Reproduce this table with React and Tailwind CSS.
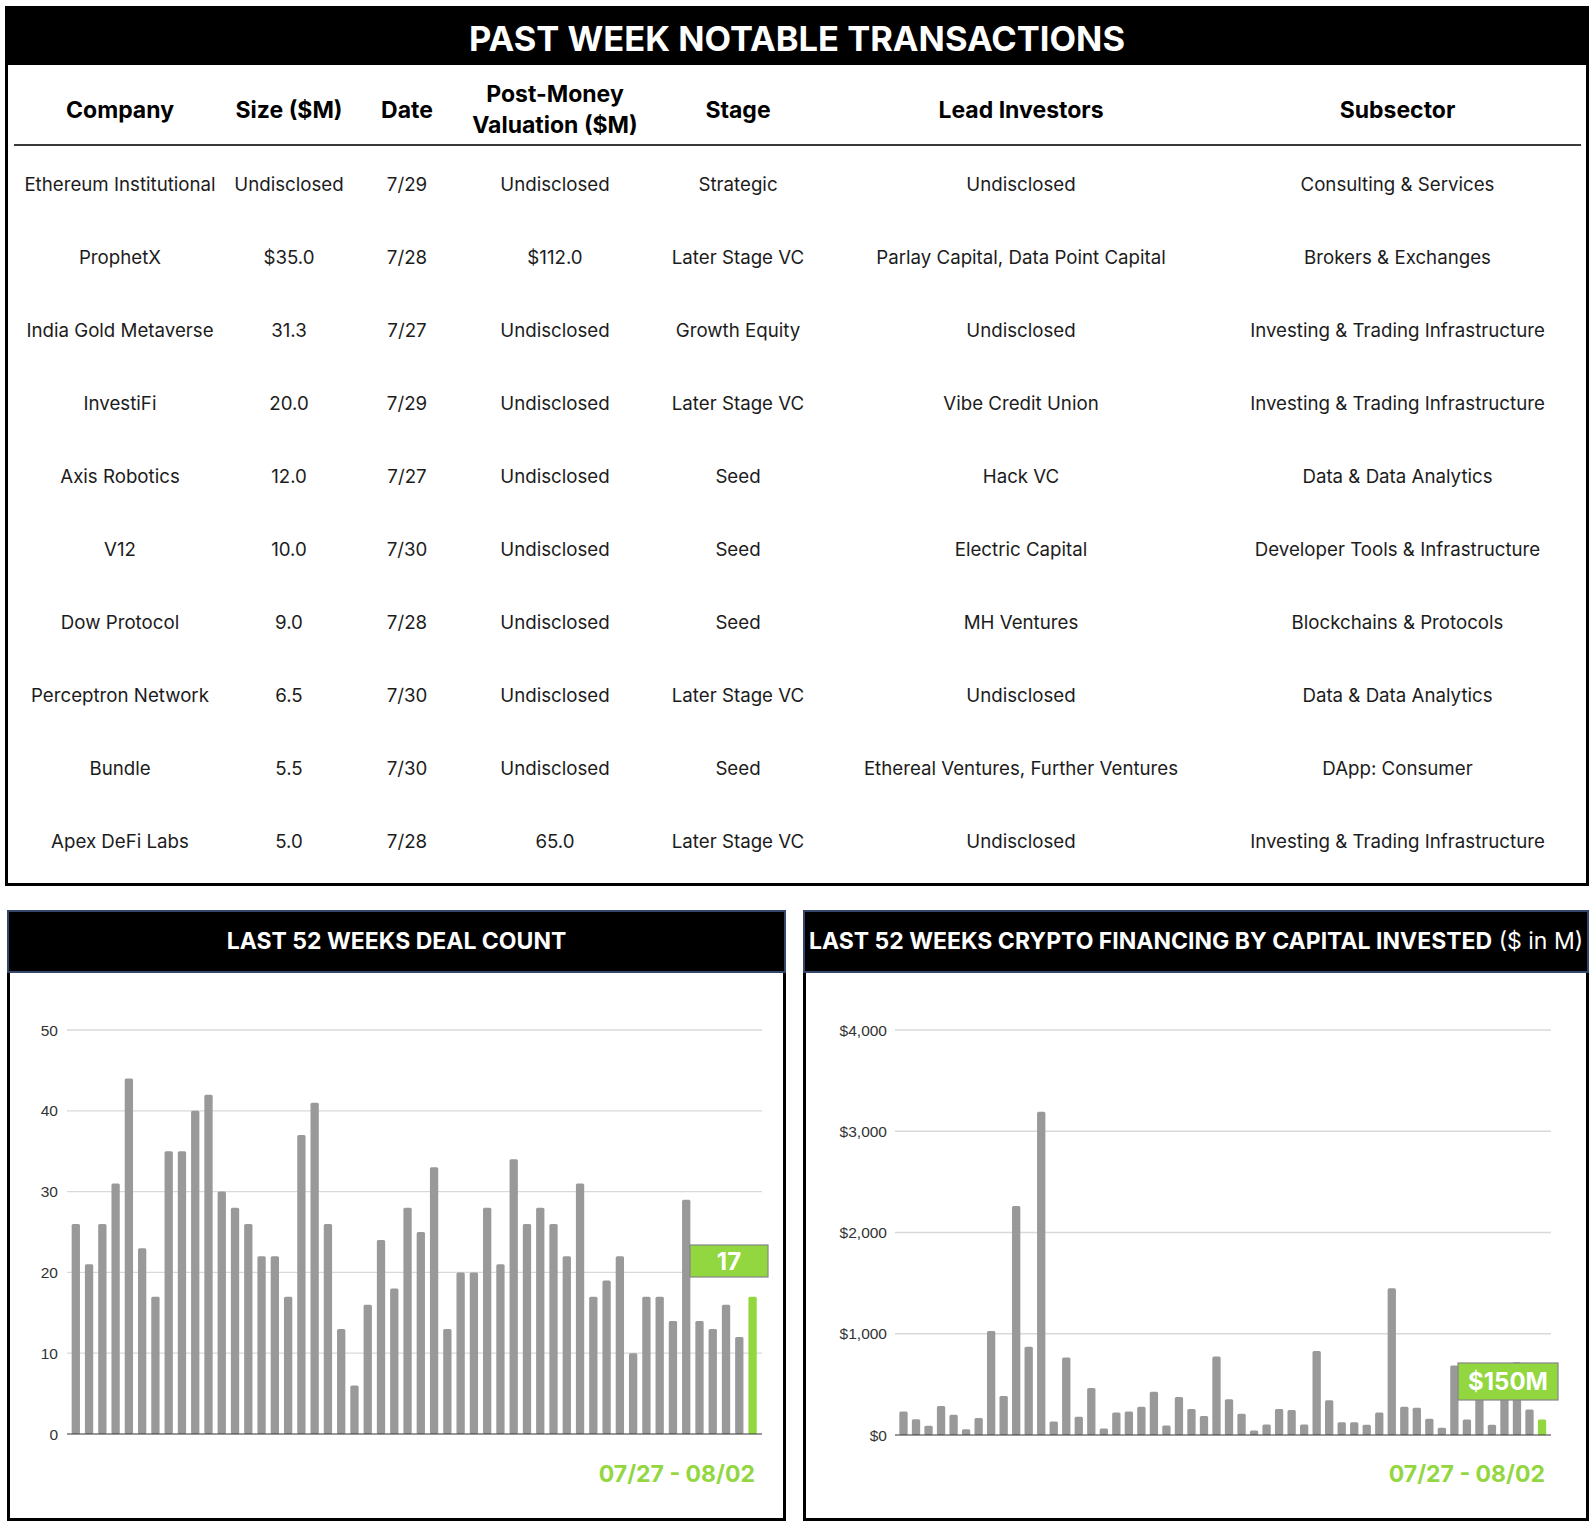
import React from 'react';

const columns = ['Company', 'Size ($M)', 'Date', 'Post-Money\nValuation ($M)', 'Stage', 'Lead Investors', 'Subsector'];

const deals = [
    ['Ethereum Institutional', 'Undisclosed', '7/29', 'Undisclosed', 'Strategic', 'Undisclosed', 'Consulting & Services'],
    ['ProphetX', '$35.0', '7/28', '$112.0', 'Later Stage VC', 'Parlay Capital, Data Point Capital', 'Brokers & Exchanges'],
    ['India Gold Metaverse', '31.3', '7/27', 'Undisclosed', 'Growth Equity', 'Undisclosed', 'Investing & Trading Infrastructure'],
    ['InvestiFi', '20.0', '7/29', 'Undisclosed', 'Later Stage VC', 'Vibe Credit Union', 'Investing & Trading Infrastructure'],
    ['Axis Robotics', '12.0', '7/27', 'Undisclosed', 'Seed', 'Hack VC', 'Data & Data Analytics'],
    ['V12', '10.0', '7/30', 'Undisclosed', 'Seed', 'Electric Capital', 'Developer Tools & Infrastructure'],
    ['Dow Protocol', '9.0', '7/28', 'Undisclosed', 'Seed', 'MH Ventures', 'Blockchains & Protocols'],
    ['Perceptron Network', '6.5', '7/30', 'Undisclosed', 'Later Stage VC', 'Undisclosed', 'Data & Data Analytics'],
    ['Bundle', '5.5', '7/30', 'Undisclosed', 'Seed', 'Ethereal Ventures, Further Ventures', 'DApp: Consumer'],
    ['Apex DeFi Labs', '5.0', '7/28', '65.0', 'Later Stage VC', 'Undisclosed', 'Investing & Trading Infrastructure'],
];

const dealCounts = [
    26, 21, 26, 31, 44, 23, 17, 35, 35, 40, 42, 30, 28, 26, 22, 22, 17, 37, 41, 26, 13, 6, 16, 24, 18, 28,
    25, 33, 13, 20, 20, 28, 21, 34, 26, 28, 26, 22, 31, 17, 19, 22, 10, 17, 17, 14, 29, 14, 13, 16, 12, 17,
];

const capital = [
    233, 155, 92, 286, 201, 56, 169, 1027, 385, 2262, 871, 3192, 134, 765, 180, 465, 63, 222, 233, 279, 427, 95, 375, 256, 188, 775,
    352, 211, 45, 104, 256, 248, 104, 830, 342, 125, 125, 102, 223, 1449, 278, 270, 161, 71, 687, 153, 420, 102, 480, 719, 251, 153,
];

const GREEN = '#92d640';

// one bar chart, drawn in the panel body's own coordinates
const BarChart = ({ width, values, ticks, gridX1, gridX2, baseY, perUnit, firstX, pitch, labelX, badge, dateX }) => (
    <svg width={width} height={545} className="block">
        {ticks.filter(t => t.v !== 0).map(t => (
            <line key={t.v} x1={gridX1} x2={gridX2} y1={baseY - t.v * perUnit} y2={baseY - t.v * perUnit} stroke="#d9d9d9" strokeWidth={1.3} />
        ))}
        {ticks.map(t => (
            <text key={t.v} x={labelX} y={baseY - t.v * perUnit + 5.5} textAnchor="end" fontSize={15.5} fill="#333"
                style={{ fontFamily: '"Liberation Sans", Arial, sans-serif' }}>
                {t.label}
            </text>
        ))}
        {values.map((v, i) => {
            const h = v * perUnit;
            const last = i === values.length - 1;
            return (
                <rect key={i} x={firstX + i * pitch - 4.15} y={baseY - h} width={8.3} height={h} rx={1.5}
                    fill={last ? GREEN : '#999999'} />
            );
        })}
        <line x1={gridX1} x2={gridX2} y1={baseY} y2={baseY} stroke="#333" strokeWidth={1.2} />
        <rect x={badge.x} y={badge.y} width={badge.w} height={badge.h} fill={GREEN} stroke="#858585" strokeWidth={1.2} />
        <text x={badge.x + badge.w / 2} y={badge.y + badge.h / 2 + 8.5} textAnchor="middle" fontSize={24} fontWeight={700} fill="#fff"
            style={{ fontFamily: 'Inter, sans-serif' }}>
            {badge.text}
        </text>
        <text x={dateX} y={509} textAnchor="end" fontSize={23} fontWeight={700} fill={GREEN}
            style={{ fontFamily: 'Inter, sans-serif' }}>
            07/27 - 08/02
        </text>
    </svg>
);

const Panel = ({ width, title, children }) => (
    <div className="flex flex-col h-[611px]" style={{ width }}>
        <div className="h-[63px] bg-black border-2 border-[#34476b] flex items-center justify-center text-white text-[23px] whitespace-nowrap">
            {title}
        </div>
        <div className="flex-1 border-x-[3px] border-b-[3px] border-black">{children}</div>
    </div>
);

export default function App() {
    return (
        <div className="w-[1596px] h-[1528px] bg-white pl-[5px] pt-[6px] font-[Inter,sans-serif] text-[#1c1c1c]">
            {/* transactions table */}
            <div className="w-[1584px] h-[880px] border-[3px] border-black flex flex-col">
                <div className="h-[56px] bg-black flex items-center justify-center pt-[3px] text-white font-bold text-[34.5px]">
                    PAST WEEK NOTABLE TRANSACTIONS
                </div>
                <div className="pl-[6px] pr-[5px]">
                    <div className="grid grid-cols-[212px_126px_110px_186px_180px_386px_367px] h-[81px] pt-[11px] border-b-2 border-[#3a3a3a] items-center text-center">
                        {columns.map(c => (
                            <div key={c} className="font-bold text-[23px] leading-[31px] text-black whitespace-pre-line">{c}</div>
                        ))}
                    </div>
                    <div className="pt-[3px]">
                        {deals.map((row, r) => (
                            <div key={r} className="grid grid-cols-[212px_126px_110px_186px_180px_386px_367px] h-[73px] items-center text-center text-[18.7px]">
                                {row.map((cell, c) => (
                                    <div key={c} className="whitespace-nowrap">{cell}</div>
                                ))}
                            </div>
                        ))}
                    </div>
                </div>
            </div>

            {/* weekly charts */}
            <div className="flex gap-[17px] mt-[24px] pl-[2px]">
                <Panel width={779} title={<span className="font-bold">LAST 52 WEEKS DEAL COUNT</span>}>
                    <BarChart
                        width={773}
                        values={dealCounts}
                        ticks={[0, 10, 20, 30, 40, 50].map(v => ({ v, label: String(v) }))}
                        gridX1={57} gridX2={752} baseY={461} perUnit={8.08}
                        firstX={65.8} pitch={13.27} labelX={48}
                        badge={{ x: 680, y: 272, w: 78, h: 32, text: '17' }}
                        dateX={745}
                    />
                </Panel>
                <Panel width={786} title={<><span className="font-bold">LAST 52 WEEKS CRYPTO FINANCING BY CAPITAL INVESTED</span>&nbsp;($ in M)</>}>
                    <BarChart
                        width={780}
                        values={capital}
                        ticks={[0, 1000, 2000, 3000, 4000].map(v => ({ v, label: v === 0 ? '$0' : `$${v / 1000},000` }))}
                        gridX1={89} gridX2={745} baseY={462} perUnit={0.10125}
                        firstX={97.5} pitch={12.52} labelX={81}
                        badge={{ x: 652, y: 390, w: 100, h: 37, text: '$150M' }}
                        dateX={739}
                    />
                </Panel>
            </div>
        </div>
    );
}
